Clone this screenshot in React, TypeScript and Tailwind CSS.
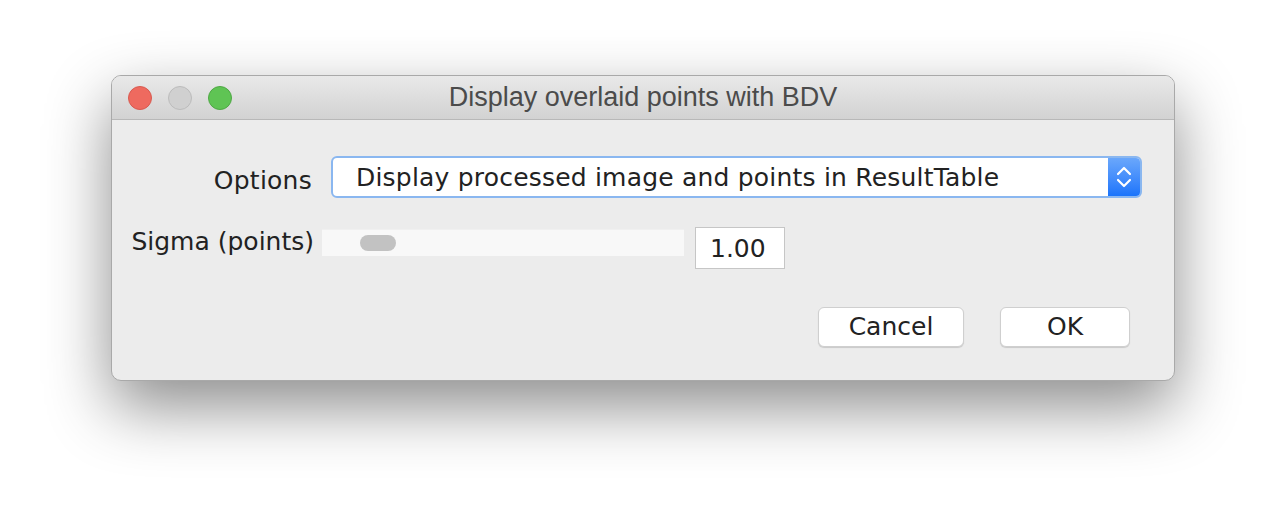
const font = { fontFamily: '"DejaVu Sans", "Liberation Sans", sans-serif' }
const titleFont = { fontFamily: '"Liberation Sans", Arial, sans-serif' }

function TrafficLights(): JSX.Element {
  return (
    <div className="flex items-center gap-[16px] pl-[16px]">
      <span className="w-[24px] h-[24px] rounded-full bg-[#ee6a5f] border border-[#d85a50]" />
      <span className="w-[24px] h-[24px] rounded-full bg-[#d0d0d0] border border-[#bcbcbc]" />
      <span className="w-[24px] h-[24px] rounded-full bg-[#5fc454] border border-[#4fa845]" />
    </div>
  )
}

function Stepper(): JSX.Element {
  return (
    <svg width="18" height="26" viewBox="0 0 18 26" fill="none" stroke="white" strokeWidth="2.2" strokeLinecap="round" strokeLinejoin="round">
      <path d="M3 10 L9 4 L15 10" />
      <path d="M3 16 L9 22 L15 16" />
    </svg>
  )
}

export default function App(): JSX.Element {
  return (
    <div className="w-[1286px] h-[528px] bg-white overflow-hidden pl-[111px] pt-[75px]" style={font}>
      <div className="w-[1064px] h-[306px] flex flex-col rounded-[10px] border border-[#a9a9a9] bg-[#ececec] shadow-[0_26px_64px_rgba(0,0,0,0.45)] overflow-hidden">
        <div className="relative h-[44px] flex-shrink-0 flex items-center bg-gradient-to-b from-[#e9e9e9] to-[#d2d2d2] border-b border-[#b8b8b8]">
          <TrafficLights />
          <div
            className="absolute inset-0 flex items-center justify-center text-[27px] text-[#4b4b4b]"
            style={titleFont}
          >
            Display overlaid points with BDV
          </div>
        </div>

        <div className="flex-1 flex flex-col">
          <div className="flex items-center mt-[36px] h-[42px]">
            <div className="w-[200px] text-right text-[25px] tracking-[0.01em] text-[#222] pt-[7px]">Options</div>
            <div className="ml-[19px] w-[811px] h-[42px] flex rounded-[6px] border-2 border-[#8ab7f0] bg-white overflow-hidden">
              <div className="flex-1 flex items-center pl-[23px] pt-[2px] text-[25px] tracking-[0.008em] text-[#222]">
                Display processed image and points in ResultTable
              </div>
              <div className="w-[32px] flex items-center justify-center bg-gradient-to-b from-[#6aa7fb] to-[#1a74fb]">
                <Stepper />
              </div>
            </div>
          </div>

          <div className="flex items-start mt-[29px]">
            <div className="w-[202px] text-right text-[25px] leading-[30px] text-[#222]">Sigma (points)</div>
            <div className="ml-[8px] mt-[2px] w-[362px] h-[27px] bg-[#f8f8f8] border-t border-[#f0f0f0] flex items-center pl-[38px]">
              <span className="w-[36px] h-[16px] rounded-full bg-[#c2c2c2]" />
            </div>
            <div className="ml-[11px] w-[90px] h-[42px] bg-white border border-[#c6c6c6] flex items-center pl-[14px] pt-[2px] text-[25px] text-[#222]">
              1.00
            </div>
          </div>

          <div className="flex justify-end gap-[36px] mt-[38px] pr-[44px]">
            <button className="w-[146px] h-[40px] rounded-[6px] bg-white border border-[#cfcfcf] shadow-[0_1px_1px_rgba(0,0,0,0.15)] text-[25px] text-[#222]">
              Cancel
            </button>
            <button className="w-[130px] h-[40px] rounded-[6px] bg-white border border-[#cfcfcf] shadow-[0_1px_1px_rgba(0,0,0,0.15)] text-[25px] text-[#222]">
              OK
            </button>
          </div>
        </div>
      </div>
    </div>
  )
}
